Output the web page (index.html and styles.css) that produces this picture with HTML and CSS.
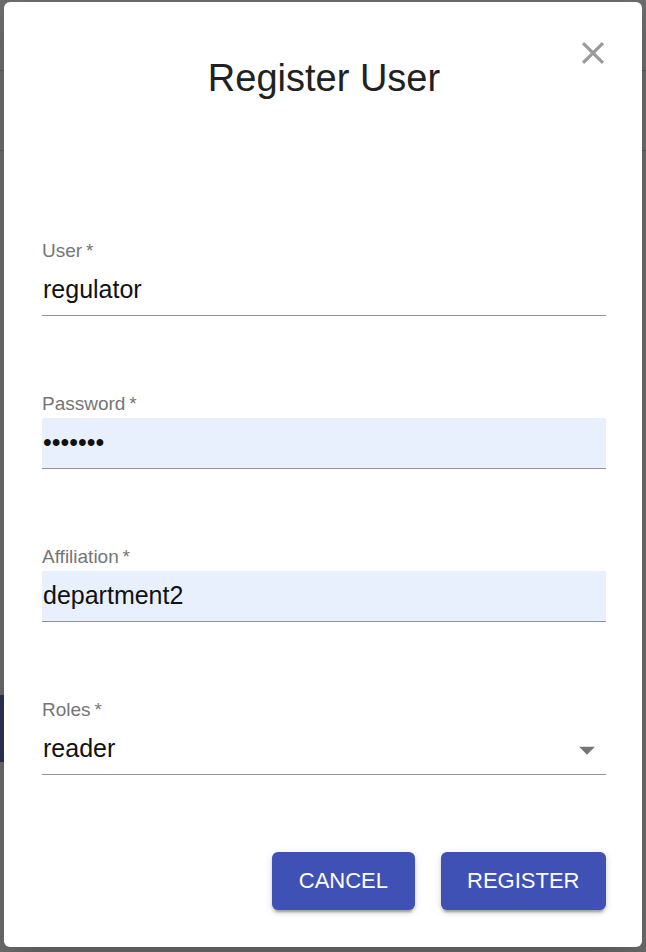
FILE: index.html
```html
<!DOCTYPE html>
<html lang="en">
<head>
<meta charset="utf-8">
<title>Register User</title>
<link rel="stylesheet" href="styles.css">
</head>
<body>
<div class="backdrop" aria-hidden="true">
  <div class="bd-line bd-line-1"></div>
  <div class="bd-line bd-line-2"></div>
  <div class="bd-block"></div>
</div>
<div class="dialog" role="dialog" aria-labelledby="dlg-title">
  <button class="close" type="button" aria-label="Close">
    <svg viewBox="0 0 24 24" width="38" height="38"><path d="M19 6.41L17.59 5 12 10.59 6.41 5 5 6.41 10.59 12 5 17.59 6.41 19 12 13.41 17.59 19 19 17.59 13.41 12z"/></svg>
  </button>
  <h2 class="title" id="dlg-title">Register User</h2>
  <form class="form">
    <div class="field">
      <label class="label" for="f-user">User&thinsp;*</label>
      <input class="input" id="f-user" type="text" value="regulator">
    </div>
    <div class="field">
      <label class="label" for="f-pass">Password&thinsp;*</label>
      <input class="input input-filled" id="f-pass" type="password" value="1234567">
    </div>
    <div class="field">
      <label class="label" for="f-aff">Affiliation&thinsp;*</label>
      <input class="input input-filled" id="f-aff" type="text" value="department2">
    </div>
    <div class="field">
      <label class="label">Roles&thinsp;*</label>
      <div class="select">
        <span class="select-value">reader</span>
        <svg class="select-icon" viewBox="0 0 24 24" width="38" height="38"><path d="M7 10l5 5 5-5z"/></svg>
      </div>
    </div>
    <div class="actions">
      <button class="btn" type="button">Cancel</button>
      <button class="btn" type="button">Register</button>
    </div>
  </form>
</div>
</body>
</html>
```
FILE: styles.css
```css
html, body {
  margin: 0;
  padding: 0;
}
body {
  background: #6d6d6d;
  width: 646px;
  height: 952px;
  overflow: hidden;
  font-family: "Liberation Sans", Arial, Helvetica, sans-serif;
  position: relative;
}
.backdrop {
  position: absolute;
  inset: 0;
}
.bd-line {
  position: absolute;
  left: 0;
  right: 0;
  height: 1px;
  background: #5c5c5c;
}
.bd-line-1 { top: 70px; }
.bd-line-2 { top: 150px; }
.bd-block {
  position: absolute;
  left: 0;
  top: 695px;
  width: 20px;
  height: 67px;
  background: #2b3152;
}
.dialog {
  position: relative;
  margin: 2px 4px 0 4px;
  width: 638px;
  height: 945px;
  box-sizing: border-box;
  background: #fff;
  border-radius: 6px;
  padding: 54px 36px 0 38px;
  box-shadow: 0 17px 40px rgba(0,0,0,0.2);
}
.close {
  position: absolute;
  top: 32px;
  right: 30px;
  width: 38px;
  height: 38px;
  padding: 0;
  border: none;
  background: none;
  cursor: pointer;
}
.close svg {
  display: block;
  fill: #9a9a9a;
}
.title {
  margin: 0 0 139px 0;
  font-size: 38px;
  line-height: 44px;
  font-weight: 400;
  color: #212121;
  text-align: center;
}
.form {
  display: flex;
  flex-direction: column;
  gap: 76px;
}
.field {
  display: flex;
  flex-direction: column;
}
.label {
  font-size: 19px;
  line-height: 24px;
  color: #757575;
}
.input {
  display: block;
  width: 100%;
  height: 51px;
  box-sizing: border-box;
  margin: 2px 0 0 0;
  padding: 10px 0 11px 1px;
  border: none;
  border-bottom: 1px solid #939393;
  border-radius: 0;
  background: transparent;
  font-family: inherit;
  font-size: 25px;
  line-height: 29px;
  color: #111;
  outline: none;
}
.input-filled {
  background: #e8f0fe;
}
.select {
  position: relative;
  height: 51px;
  margin-top: 2px;
  box-sizing: border-box;
  padding: 10px 0 11px 1px;
  border-bottom: 1px solid #939393;
  font-size: 25px;
  line-height: 29px;
  color: #111;
}
.select-icon {
  position: absolute;
  right: 0;
  top: 7px;
  fill: #757575;
}
.actions {
  display: flex;
  justify-content: flex-end;
  gap: 26px;
  margin-top: 1px;
}
.btn {
  height: 58px;
  padding: 0 26.5px;
  border: none;
  border-radius: 6px;
  background: #3f51b5;
  color: #fff;
  font-family: inherit;
  font-size: 22px;
  text-transform: uppercase;
  cursor: pointer;
  box-shadow: 0 5px 2px -3px rgba(0,0,0,0.2), 0 3px 3px 0 rgba(0,0,0,0.14), 0 2px 8px 0 rgba(0,0,0,0.12);
}
```
